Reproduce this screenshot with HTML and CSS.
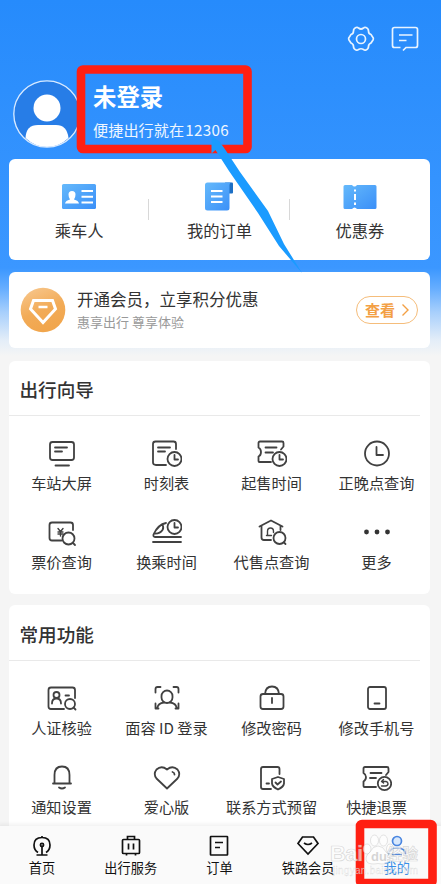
FILE: index.html
```html
<!DOCTYPE html>
<html lang="zh-CN">
<head>
<meta charset="utf-8">
<title>我的</title>
<link rel="stylesheet" href="styles.css">
</head>
<body>
<main class="phone">
  <header class="top">
    <div class="tools">
      <svg width="28" height="28" viewBox="0 0 28 28"><path d="M9 2.500Q10.500 2 11.500 3Q14 5 16.500 3Q17.500 2 19 2.500Q21.500 3.500 21.500 6Q21.500 9 24 9.500L26.300 13Q26.500 14 26 15L24 18Q21.500 19 21.500 21.500Q21.500 24 19 25Q17.500 25.500 16.500 24.500Q14 23 11.500 24.500Q10.500 25.500 9 25Q6.500 24 6.500 21.500Q6.500 19 4 18L2 15Q1.500 14 1.700 13L4 9.500Q6.500 9 6.500 6Q6.500 3.500 9 2.500Z"/><circle cx="14" cy="14" r="4.500"/></svg>
      <svg width="28" height="28" viewBox="0 0 28 28"><path d="M9.500 22.500H3.500Q1.500 22.500 1.500 20.500V4.500Q1.500 2.500 3.500 2.500H24.500Q26.500 2.500 26.500 4.500V20.500Q26.500 22.500 24.500 22.500H15L12 25.500M8 10H21.500M8 15.500H15.500"/></svg>
    </div>
    <div class="profile">
      <svg width="68" height="68" viewBox="0 0 68 68"><circle cx="34" cy="34" r="33" fill="#277de7"/><circle cx="34" cy="28" r="13.500" fill="#fff"/><path d="M12.500 58Q13 45 25 45H43Q54 45 55.500 58Q46 67 34 67Q22 67 12.500 58Z" fill="#fff"/><circle cx="34" cy="34" r="33.200" fill="none" stroke="#d9eaff" stroke-width="1.300"/></svg>
      <div class="who"><h1>未登录</h1><p>便捷出行就在<span class="digits">12306</span></p></div>
    </div>
  </header>

  <section class="card shortcuts">
    <svg width="0" height="0" class="defs"><defs><linearGradient id="blue" x1="0" y1="0" x2="1" y2="1"><stop offset="0" stop-color="#65b9fb"/><stop offset="1" stop-color="#3a8ff8"/></linearGradient></defs></svg>
    <div class="shortcut">
      <svg width="36" height="30" viewBox="0 0 36 30"><rect x="1" y="2" width="34" height="25" rx="1.500" fill="url(#blue)"/><path d="M4 21.500Q4.500 18.500 9 17.500Q7.500 15.500 7.500 12.500Q7.500 9 11 9Q14.500 9 14.500 12.500Q14.500 15.500 13 17.500Q17.500 18.500 18 21.500Z" fill="#fff"/><path d="M20.500 9H32M20.500 14.800H32M20.500 20.500H32" stroke="#fff" stroke-width="2"/></svg>
      <span>乘车人</span>
    </div>
    <div class="shortcut">
      <svg width="30" height="30" viewBox="0 0 30 30"><path d="M21 0.500H28Q29 .5 29 1.500V10.500Q29 11.500 28 11.500H24Z" fill="#1c6fc5"/><path d="M3.500 .5H27Q25.500 1 25.500 3V26Q25.500 28.500 23 28.500H3.500Q1 28.500 1 26V3Q1 .5 3.500 .5Z" fill="url(#blue)"/><path d="M7 9H18.500M7 14.500H18.500M7 20H18.500" stroke="#fff" stroke-width="2"/></svg>
      <span>我的订单</span>
    </div>
    <div class="shortcut">
      <svg width="36" height="30" viewBox="0 0 36 30"><path d="M3 3H10Q12.500 6 15 3H33Q34.500 3 34.500 4.500V25.500Q34.500 27 33 27H15Q12.500 24 10 27H3Q1.500 27 1.500 25.500V4.500Q1.500 3 3 3Z" fill="url(#blue)"/><path d="M13 7.500V9.500M13 12V18M13 20.500V23" stroke="#fff" stroke-width="2"/></svg>
      <span>优惠券</span>
    </div>
  </section>

  <section class="card member">
    <svg width="46" height="46" viewBox="0 0 46 46"><defs><linearGradient id="gold" x1="0" y1="0" x2=".4" y2="1"><stop offset="0" stop-color="#f8c991"/><stop offset=".6" stop-color="#f2ab57"/><stop offset="1" stop-color="#f1a64d"/></linearGradient></defs><circle cx="23" cy="23" r="22.300" fill="url(#gold)"/><path d="M13.500 13.500H32.500L35.500 22L23 35.500L10.500 22Z" fill="none" stroke="#fff" stroke-width="3"/><path d="M18.500 20H27.500" stroke="#fff" stroke-width="2.500"/></svg>
    <div class="offer"><h2>开通会员，立享积分优惠</h2><p>惠享出行 尊享体验</p></div>
    <a class="view">查看<svg width="9" height="14" viewBox="0 0 9 14"><path d="M1.500 1.500L7 7L1.500 12.500"/></svg></a>
  </section>

  <section class="card panel">
    <h2>出行向导</h2>
    <div class="grid">
      <div class="item"><svg viewBox="0 0 30 30"><rect x="3" y="4" width="24" height="18" rx="2.500"/><path d="M8 9.500H20M8 13.500H15M8.500 27.500H22"/></svg><span>车站大屏</span></div>
      <div class="item"><svg viewBox="0 0 30 30"><path d="M14 27H4Q1 27 1 24.500V6Q1 3.500 3.500 3.500H21.500Q24 3.500 24 6V11M6 9.500H18M6 13.500H13"/><circle cx="22.500" cy="21" r="7"/><path d="M22.500 17V21.500H26"/></svg><span>时刻表</span></div>
      <div class="item"><svg viewBox="0 0 30 30"><path d="M14 24H2.500Q1.500 24 1.500 23V18.500Q4 17.500 4 14Q4 11 1.500 9.500V5Q1.500 3.500 3 3.500H25Q26.500 3.500 26.500 5V8.500L24 11.500M8.500 9.500H19.500M8.500 14.500H16"/><circle cx="22.500" cy="21" r="7"/><path d="M22.500 17V21.500H26"/></svg><span>起售时间</span></div>
      <div class="item"><svg viewBox="0 0 30 30"><circle cx="15" cy="15.500" r="12"/><path d="M14.500 9V17H21"/></svg><span>正晚点查询</span></div>
      <div class="item"><svg viewBox="0 0 30 30"><path d="M14.500 23.500H5Q2.500 23.500 2.500 21V8Q2.500 5.500 5 5.500H23.500Q26 5.500 26 8V13"/><path class="fine" d="M11 11.500L13.500 14.500L16 11.500M13.500 14.500V19M11 15H16M11 17H16"/><circle cx="21.500" cy="21.500" r="6"/><path d="M26 26L28 28"/></svg><span>票价查询</span></div>
      <div class="item"><svg viewBox="0 0 30 30"><path d="M14 6Q6 7.500 1.500 17.500Q1 20 3 20H29M1 25H29M2 16.500Q8 17 10.500 13Q12 11 10.500 7.500"/><circle cx="22.500" cy="10" r="7"/><path d="M22.500 6V10.500H26"/></svg><span>换乘时间</span></div>
      <div class="item"><svg viewBox="0 0 30 30"><path d="M2.500 9.500L14 3.500L25.500 9.500M4.500 9V20.500Q4.500 23 7 23H14M23.500 9V13"/><path class="fine" d="M10.500 18V14.500Q10.500 11 13.500 11Q16.500 11 16.500 14.500M9.500 18.500H14.500M16.500 14.500V15.500"/><circle cx="22.500" cy="21" r="6"/><path d="M27 25.500L28.500 27"/></svg><span>代售点查询</span></div>
      <div class="item"><svg viewBox="0 0 30 30"><g class="dots"><circle cx="4.500" cy="15" r="2.400"/><circle cx="15" cy="15" r="2.400"/><circle cx="25.500" cy="15" r="2.400"/></g></svg><span>更多</span></div>
    </div>
  </section>

  <section class="card panel common">
    <h2>常用功能</h2>
    <div class="grid">
      <div class="item"><svg viewBox="0 0 30 30"><path d="M17 26H4Q1.500 26 1.500 23.500V7Q1.500 4.500 4 4.500H25.500Q28 4.500 28 7V15M18.500 12.500H22M5 20.500Q5 15.500 9.500 15.500Q14 15.500 14 20.500"/><circle cx="9.500" cy="12" r="3"/><circle cx="23" cy="21" r="5"/><path d="M26.500 24.500L28.500 26.500"/></svg><span>人证核验</span></div>
      <div class="item"><svg viewBox="0 0 30 30"><path d="M3.500 9.500V6Q3.500 4 5.500 4H8.500M21.500 4H24.500Q26.500 4 26.500 6V9.500M3.500 20.500V25.500H6.500M23.500 25.500H26.500V20.500M5 25.500Q6 20 12 19.500M25 25.500Q24 20 18 19.500"/><rect x="9.500" y="7.500" width="11" height="12.500" rx="5.500"/></svg><span>面容 ID 登录</span></div>
      <div class="item"><svg viewBox="0 0 30 30"><rect x="3.500" y="11" width="23" height="15" rx="2.500"/><path d="M8 11Q8.500 3.500 15 3.500Q21.500 3.500 22 11M15 15V20"/></svg><span>修改密码</span></div>
      <div class="item"><svg viewBox="0 0 30 30"><rect x="6" y="4" width="18" height="22" rx="2"/><path d="M12.500 20.500H17.500"/></svg><span>修改手机号</span></div>
      <div class="item"><svg viewBox="0 0 30 30"><path d="M6 21.500H24M7.500 21.500V13Q7.500 4.500 15 4.500Q22.500 4.500 22.500 13V21.500M12 25.500Q15 27.500 18 25.500"/></svg><span>通知设置</span></div>
      <div class="item"><svg viewBox="0 0 30 30"><path d="M15 26.500L4.500 16.500Q1 12 4.500 7.500Q9.500 3 15 7.500Q20.500 3 25.500 7.500Q29 12 25.500 16.500ZM20.500 10Q22.500 10.500 22.500 12.500"/></svg><span>爱心版</span></div>
      <div class="item"><svg viewBox="0 0 30 30"><path d="M14 27H6Q4 27 4 25V7Q4 5 6 5H20.500Q22.500 5 22.500 7V12M9.500 21.500H12M21 15L27 17V21.500Q26.500 25 21 27.500Q15.500 25 15 21.500V17ZM18.500 20.500L20.500 22.500L24 19.500"/></svg><span>联系方式预留</span></div>
      <div class="item"><svg viewBox="0 0 30 30"><path d="M14 25H2.500Q1.500 25 1.500 24V19.500Q4 18 4 15Q4 12.500 1.500 11V6.500Q1.500 5 3 5H25Q26.500 5 26.500 6.500V10L24 13M8.500 11H19.500M8 16H14"/><circle cx="22.500" cy="21.500" r="6.700"/><path class="fine" d="M21.500 17.500L19.500 19.500L21.500 21M19.500 19.500H24Q26 20 26 21.700Q26 23.700 23.500 24H19.500"/></svg><span>快捷退票</span></div>
    </div>
  </section>

  <nav class="tabs">
    <div class="tab"><svg viewBox="0 0 24 24"><path d="M8 18.500Q4 16 4 11Q4 3.500 12 3.500Q20 3.500 20 11Q20 16 16 18.500M12 2V4M12 11.500V21M6.500 21H17.500"/><circle cx="12" cy="11" r="1.600"/></svg><span>首页</span></div>
    <div class="tab"><svg viewBox="0 0 24 24"><rect x="3.500" y="5.500" width="17" height="14" rx="1"/><path d="M8.500 5.500V2.500H15.500V5.500M9.500 9.500V15.500M14.500 9.500V15.500M7.500 19.500V21.500M16.500 19.500V21.500"/></svg><span>出行服务</span></div>
    <div class="tab"><svg viewBox="0 0 24 24"><rect x="3.500" y="2.500" width="17" height="18.500" rx=".5"/><path d="M8 8.500H16M8 13.500H13"/></svg><span>订单</span></div>
    <div class="tab"><svg viewBox="0 0 24 24"><path d="M6.500 3H17.500L22 9.500L12 20L2 9.500ZM8 9Q12 12 16 9"/></svg><span>铁路会员</span></div>
    <div class="tab active"><svg viewBox="0 0 24 24"><circle cx="12" cy="7" r="4.500"/><path d="M3.500 20.500Q3.500 14 12 14Q20.500 14 20.500 20.500M7 20.500H17"/></svg><span>我的</span></div>
  </nav>

  <svg class="marks" width="447" height="887" viewBox="0 0 447 887">
    <rect x="81" y="69.500" width="166.500" height="79.500" rx="2"/>
    <rect x="360" y="824" width="72.500" height="59" rx="2"/>
    <path d="M211.500 136.500L219.500 141.500L225.500 150L240 172L268 211L284 244L302 273L279 246L258 213L229 171L215.500 150L211.500 153.500Z"/>
  </svg>
  <svg class="watermark" width="98" height="50" viewBox="0 0 98 50">
    <text class="logo" x="4" y="32" textLength="33">Bai</text>
    <ellipse cx="41" cy="20" rx="4" ry="5"/><ellipse cx="48.500" cy="11.500" rx="4" ry="5.500"/><ellipse cx="57.500" cy="11.500" rx="4" ry="5.500"/><ellipse cx="64" cy="20" rx="3.500" ry="5"/>
    <path d="M52 17Q57 17 60 23Q66 28 63 33Q60 36 52 34.500Q44 36 41 33Q38 28 44 23Q47 17 52 17Z"/>
    <text class="du" x="45" y="32">du</text>
    <text class="logo cn" x="61" y="31" textLength="31">经验</text>
    <text class="url" x="7" y="45" textLength="85">jingyan.baidu.com</text>
  </svg>
</main>
</body>
</html>
```
FILE: styles.css
```css
* { box-sizing: border-box; }
body { margin: 0; background: #fff; color: #333; font-family: "Noto Sans CJK SC", sans-serif; }
h1, h2, p { margin: 0; }
svg { display: block; flex: none; }

.phone {
  position: relative;
  display: flex;
  flex-direction: column;
  width: 441px;
  height: 884px;
  padding: 0 11px 0 9px;
  background: linear-gradient(#268bfc 0, #3b97ff 268px, #65adff 288px, #a7cffc 312px, #e3edf8 340px, #f5f5f5 356px);
}

.top { height: 159px; padding: 25px 11px 0 4px; }
.tools { display: flex; justify-content: flex-end; gap: 16px; }
.tools svg { fill: none; stroke: #e9f4ff; stroke-width: 1.7; }
.profile { display: flex; gap: 12px; margin-top: 27px; color: #fff; }
.who h1 { font-size: 23.4px; line-height: 32px; font-weight: 700; }
.who p { margin-top: 6px; font-size: 15.2px; line-height: 22px; color: #eef6ff; }
.digits { margin-left: 1px; letter-spacing: .35px; }

.card { background: #fff; border-radius: 6px; flex: none; }

.shortcuts { display: flex; height: 101px; padding-top: 23px; }
.defs { position: absolute; }
.shortcut { position: relative; flex: 1; display: flex; flex-direction: column; align-items: center; font-size: 16.3px; line-height: 24px; }
.shortcut span { margin-top: 6px; }
.shortcut + .shortcut::before { content: ""; position: absolute; left: -1px; top: 17px; width: 1px; height: 21px; background: #d8d8d8; }

.member { display: flex; align-items: flex-start; height: 76px; margin-top: 12px; padding: 15px 12px 0 11px; }
.offer { flex: 1; margin-left: 11px; }
.offer h2 { font-size: 16.5px; line-height: 24px; font-weight: 400; }
.offer p { margin-top: 1px; font-size: 13px; line-height: 20px; color: #999; }
.view { display: flex; align-items: center; justify-content: center; gap: 6px; width: 62px; height: 28px; margin-top: 9px; padding: 0 0 1px 1px; border: 1px solid #f5bd7b; border-radius: 14px; color: #f3a044; font-size: 15px; font-weight: 700; }
.view svg { fill: none; stroke: #f3a044; stroke-width: 1.4; }

.panel { height: 233px; margin-top: 13px; }
.panel h2 { height: 55px; margin-right: 10px; padding-left: 10.5px; border-bottom: 1px solid #e9e9e9; font-size: 18.6px; line-height: 56px; font-weight: 500; }
.grid { display: grid; grid-template-columns: repeat(4, 105px); row-gap: 25px; padding-top: 22px; }
.item { display: flex; flex-direction: column; align-items: center; font-size: 15.2px; line-height: 20px; white-space: nowrap; }
.item svg { width: 30px; height: 30px; margin-bottom: 4px; fill: none; stroke: #414141; stroke-width: 1.8; stroke-linecap: round; stroke-linejoin: round; }
.item .fine { stroke-width: 1.4; }
.item .dots { fill: #333; stroke: none; }
.common { height: 221px; margin-top: 11px; border-radius: 6px 6px 0 0; }
.common h2 { height: 56px; line-height: 58px; }

.tabs { display: flex; flex: 1; margin: 0 -13px 0 -11.3px; padding-top: 8px; background: #fafafa; box-shadow: 0 -2px 4px rgba(0, 0, 0, .06); clip-path: inset(-8px 2px 0 2.3px); }
.tab { flex: 0 0 88.7px; display: flex; flex-direction: column; align-items: center; color: #111; font-size: 13.2px; line-height: 18px; }
.tab svg { width: 24px; height: 24px; margin-bottom: 1px; fill: none; stroke: currentColor; stroke-width: 1.7; }
.active { color: #3b8fe8; }
.active svg { stroke: #4a86e0; }
.active circle { fill: #d8e8fc; }

.marks { position: absolute; left: 0; top: 0; }
.marks rect { fill: none; stroke: #ff1f12; stroke-width: 8.6; }
.marks path { fill: #1a9bff; }

.watermark { position: absolute; left: 326px; top: 829px; fill: rgba(255, 255, 255, .6); stroke: rgba(160, 160, 160, .4); stroke-width: .7; font-family: "Liberation Sans", "Noto Sans CJK SC", sans-serif; font-weight: 700; }
.logo { font-size: 22px; }
.cn { font-size: 15.5px; }
.du { font-size: 13px; fill: rgba(185, 185, 185, .6); stroke: none; }
.url { font-size: 10px; font-weight: 400; stroke-width: .3; }
```
